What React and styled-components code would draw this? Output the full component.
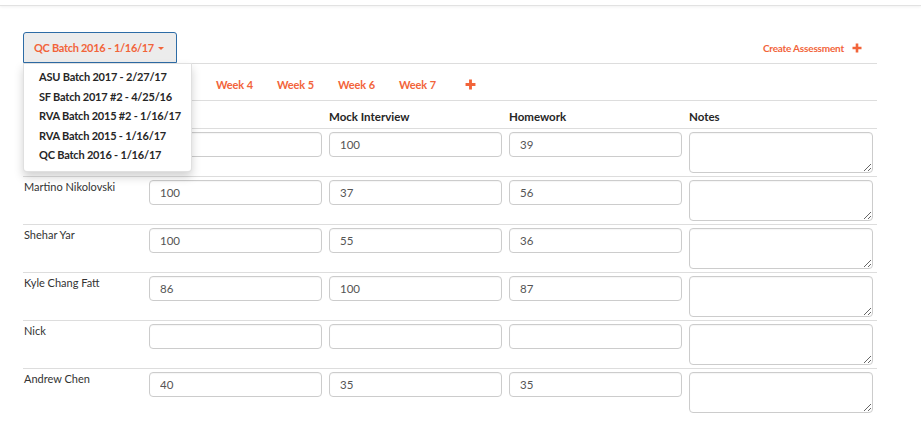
import React from 'react';
import styled, { createGlobalStyle } from 'styled-components';

//----COMPONENT STYLING----//

const GlobalStyle = createGlobalStyle`
  body {
    margin: 0;
    background: #fff;
    font-family: Lato, "Open Sans", sans-serif;
    color: #333;
  }
`;

const ORANGE = '#f2643a';
const LINE = '#dddddd';

const TopBar = styled.div`
  height: 5px;
  border-bottom: 1px solid #e2e2e2;
  box-shadow: 0 1px 3px rgba(0, 0, 0, 0.06);
`;

const Container = styled.div`
  width: 854px;
  margin-left: 23px;
`;

const HeaderBar = styled.div`
  display: flex;
  justify-content: space-between;
  align-items: center;
  margin-top: 26px;
  padding-right: 15px;
`;

const DropWrap = styled.div`
  position: relative;
  z-index: 5;
`;

const DropButton = styled.button`
  display: flex;
  align-items: center;
  gap: 4px;
  height: 31px;
  padding: 0 12px 0 10px;
  background: #ececec;
  border: 1px solid #2d6ca6;
  border-radius: 3px 3px 0 0;
  color: ${ORANGE};
  font-family: Lato, sans-serif;
  font-weight: 700;
  font-size: 11px;
  letter-spacing: -0.3px;
  cursor: pointer;
`;

const Caret = styled.span`
  width: 0;
  height: 0;
  border-top: 3px solid ${ORANGE};
  border-left: 3px solid transparent;
  border-right: 3px solid transparent;
  margin-top: 1px;
`;

const Menu = styled.ul`
  position: absolute;
  top: 100%;
  left: 0;
  width: 167px;
  margin: 0;
  padding: 3px 0 6px;
  list-style: none;
  background: #fff;
  border: 1px solid rgba(0, 0, 0, 0.12);
  border-radius: 0 0 4px 4px;
  box-shadow: 0 5px 10px rgba(0, 0, 0, 0.18);
`;

const MenuItem = styled.li`
  padding: 0 8px 0 15px;
  line-height: 19.5px;
  font-size: 11px;
  letter-spacing: -0.2px;
  font-weight: 700;
  color: #262626;
  white-space: nowrap;
`;

const CreateLink = styled.a`
  display: flex;
  align-items: center;
  gap: 8px;
  color: ${ORANGE};
  font-size: 10px;
  letter-spacing: -0.2px;
  font-weight: 700;
  text-decoration: none;
`;

const Tabs = styled.div`
  display: flex;
  align-items: center;
  height: 36px;
  padding-left: 10px;
  border-top: 1px solid ${LINE};
  border-bottom: 1px solid ${LINE};
`;

const Tab = styled.span`
  width: ${p => (p.$plus ? 'auto' : '61px')};
  padding-left: ${p => (p.$plus ? '5px' : '0')};
  color: ${ORANGE};
  font-size: 11px;
  letter-spacing: -0.1px;
  font-weight: 700;
  display: flex;
  align-items: center;
  margin-top: 4px;
`;

const Row = styled.div`
  display: grid;
  grid-template-columns: 126px 180px 180px 180px 188px;
  border-bottom: 1px solid ${LINE};
  height: ${p => (p.$head ? '27px' : '47px')};
  align-items: ${p => (p.$head ? 'center' : 'start')};

  &:last-child {
    border-bottom-color: transparent;
  }
`;

const HeadCell = styled.div`
  font-size: 11.5px;
  font-weight: 700;
  color: #262626;
  padding-top: 3px;
`;

const Name = styled.div`
  font-size: 11px;
  color: #333;
  padding: 3px 0 0 1px;
`;

const Cell = styled.div`
  padding-top: 3px;
`;

const ScoreInput = styled.input`
  box-sizing: border-box;
  width: 173px;
  height: 25px;
  padding: 0 10px;
  border: 1px solid #cccccc;
  border-radius: 4px;
  font-family: Lato, sans-serif;
  font-size: 11.5px;
  color: #555;
  box-shadow: inset 0 1px 1px rgba(0, 0, 0, 0.04);
`;

const Notes = styled.textarea`
  box-sizing: border-box;
  display: block;
  width: 184px;
  height: 41px;
  border: 1px solid #cccccc;
  border-radius: 4px;
  font-family: Lato, sans-serif;
  box-shadow: inset 0 1px 1px rgba(0, 0, 0, 0.04);
`;

//----DATA----//

const batches = [
  'ASU Batch 2017 - 2/27/17',
  'SF Batch 2017 #2 - 4/25/16',
  'RVA Batch 2015 #2 - 1/16/17',
  'RVA Batch 2015 - 1/16/17',
  'QC Batch 2016 - 1/16/17',
];

const students = [
  { name: 'Adam Rivera', scores: ['95', '100', '39'] },
  { name: 'Martino Nikolovski', scores: ['100', '37', '56'] },
  { name: 'Shehar Yar', scores: ['100', '55', '36'] },
  { name: 'Kyle Chang Fatt', scores: ['86', '100', '87'] },
  { name: 'Nick', scores: ['', '', ''] },
  { name: 'Andrew Chen', scores: ['40', '35', '35'] },
];

const PlusIcon = ({ size = 10 }) => (
  <svg width={size} height={size} viewBox="0 0 10 10">
    <path d="M5 0.5V9.5M0.5 5H9.5" stroke={ORANGE} strokeWidth="2.6" />
  </svg>
);

//----COMPONENT BUILDS----//

const App = () => {
  return (
    <>
      <GlobalStyle />
      <TopBar />
      <Container>
        <HeaderBar>
          <DropWrap>
            <DropButton>
              QC Batch 2016 - 1/16/17 <Caret />
            </DropButton>
            <Menu>
              {batches.map(b => (
                <MenuItem key={b}>{b}</MenuItem>
              ))}
            </Menu>
          </DropWrap>
          <CreateLink href="#">
            Create Assessment <PlusIcon />
          </CreateLink>
        </HeaderBar>

        <Tabs>
          {['Week 1', 'Week 2', 'Week 3', 'Week 4', 'Week 5', 'Week 6', 'Week 7'].map(w => (
            <Tab key={w}>{w}</Tab>
          ))}
          <Tab $plus>
            <PlusIcon size={11} />
          </Tab>
        </Tabs>

        <Row $head>
          <HeadCell>Name</HeadCell>
          <HeadCell>Quiz</HeadCell>
          <HeadCell>Mock Interview</HeadCell>
          <HeadCell>Homework</HeadCell>
          <HeadCell>Notes</HeadCell>
        </Row>

        {students.map(s => (
          <Row key={s.name}>
            <Name>{s.name}</Name>
            {s.scores.map((v, i) => (
              <Cell key={i}>
                <ScoreInput defaultValue={v} />
              </Cell>
            ))}
            <Cell>
              <Notes />
            </Cell>
          </Row>
        ))}
      </Container>
    </>
  );
};

export default App;
